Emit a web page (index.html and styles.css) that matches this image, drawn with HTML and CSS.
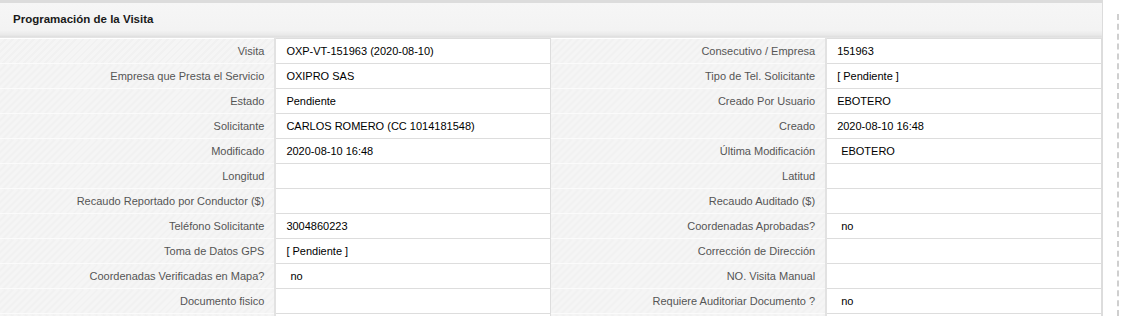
FILE: index.html
```html
<!DOCTYPE html>
<html lang="es">
<head>
<meta charset="utf-8">
<link rel="stylesheet" href="styles.css">
</head>
<body>
<div class="page">
  <section class="panel">
    <header class="panel-head">Programación de la Visita</header>
    <table class="grid">
      <colgroup><col class="c"><col class="c"><col class="c"><col class="c"></colgroup>
      <tr><th>Visita</th><td>OXP-VT-151963 (2020-08-10)</td><th>Consecutivo / Empresa</th><td>151963</td></tr>
      <tr><th>Empresa que Presta el Servicio</th><td>OXIPRO SAS</td><th>Tipo de Tel. Solicitante</th><td>[ Pendiente ]</td></tr>
      <tr><th>Estado</th><td>Pendiente</td><th>Creado Por Usuario</th><td>EBOTERO</td></tr>
      <tr><th>Solicitante</th><td>CARLOS ROMERO (CC 1014181548)</td><th>Creado</th><td>2020-08-10 16:48</td></tr>
      <tr><th>Modificado</th><td>2020-08-10 16:48</td><th>Última Modificación</th><td class="ind">EBOTERO</td></tr>
      <tr><th>Longitud</th><td></td><th>Latitud</th><td></td></tr>
      <tr><th>Recaudo Reportado por Conductor ($)</th><td></td><th>Recaudo Auditado ($)</th><td></td></tr>
      <tr><th>Teléfono Solicitante</th><td>3004860223</td><th>Coordenadas Aprobadas?</th><td class="ind">no</td></tr>
      <tr><th>Toma de Datos GPS</th><td>[ Pendiente ]</td><th>Corrección de Dirección</th><td></td></tr>
      <tr><th>Coordenadas Verificadas en Mapa?</th><td class="ind">no</td><th>NO. Visita Manual</th><td></td></tr>
      <tr><th>Documento fisico</th><td></td><th>Requiere Auditoriar Documento ?</th><td class="ind">no</td></tr>
      <tr><th>&nbsp;</th><td></td><th>&nbsp;</th><td></td></tr>
    </table>
  </section>
  <div class="divider"></div>
</div>
</body>
</html>
```
FILE: styles.css
```css
html, body {
  margin: 0;
  padding: 0;
  background: #fff;
  font-family: "Liberation Sans", Arial, sans-serif;
  font-size: 11px;
  overflow: hidden;
}
.page {
  display: flex;
  align-items: flex-start;
  height: 316px;
  overflow: hidden;
}
.panel {
  width: 1102px;
  border-top: 3px solid #dcdcdc;
  border-right: 1px solid #dcdcdc;
  flex: none;
}
.panel-head {
  height: 34px;
  line-height: 32px;
  padding-left: 13px;
  font-weight: bold;
  font-size: 11.5px;
  color: #1a1a1a;
  background: linear-gradient(#f6f6f6 0, #f3f3f3 80%, #e9e9e9 94%, #dedede 100%);
  border-bottom: 1px solid #e4e4e4;
}
.grid {
  width: 100%;
  border-collapse: collapse;
  table-layout: fixed;
}
.grid col.c {
  width: 25%;
}
.grid th, .grid td {
  height: 24px;
  padding: 0 10px;
  font-size: 11px;
  white-space: nowrap;
  overflow: hidden;
}
.grid th {
  font-weight: normal;
  text-align: right;
  color: #555;
  background: repeating-linear-gradient(135deg, #f5f5f5 0 3px, #f1f1f1 3px 5px);
  border-bottom: 1px solid #fbfbfb;
  border-right: 2px solid #e2e2e2;
}
.grid td {
  color: #000;
  background: #fff;
  border: 1px solid #dddddd;
  border-left: none;
}
.grid td.ind {
  padding-left: 14px;
}
.divider {
  margin-left: 14px;
  margin-top: 14px;
  width: 0;
  height: 302px;
  border-left: 2px dashed #cfcfcf;
}
```
